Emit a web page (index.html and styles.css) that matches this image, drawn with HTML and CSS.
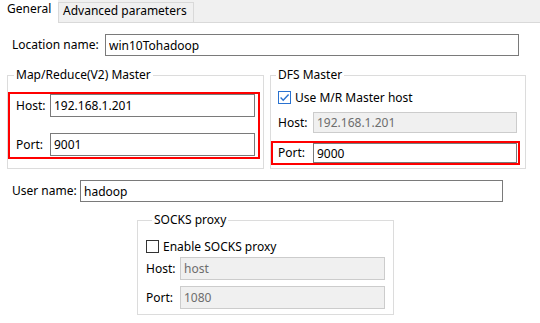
FILE: index.html
```html
<!DOCTYPE html>
<html>
<head>
<meta charset="utf-8">
<link rel="stylesheet" href="styles.css">
</head>
<body>
<div class="tabstrip">
  <div class="tab active">General</div>
  <div class="tab">Advanced parameters</div>
</div>
<div class="panel">
  <div class="row loc">
    <label class="lbl lbl-loc">Location name:</label>
    <input class="field in-loc" value="win10Tohadoop">
  </div>
  <div class="groups">
    <fieldset class="group mr">
      <legend>Map/Reduce(V2) Master</legend>
      <div class="hl hl-mr">
        <div class="frow"><label class="lbl lbl-s">Host:</label><input class="field in-mr" value="192.168.1.201"></div>
        <div class="frow gap16"><label class="lbl lbl-s">Port:</label><input class="field in-mr" value="9001"></div>
      </div>
    </fieldset>
    <fieldset class="group dfs">
      <legend>DFS Master</legend>
      <div class="check-row dfs-check">
        <span class="cb"><svg width="13" height="13" viewBox="0 0 13 13"><rect x="0.5" y="0.5" width="12" height="12" fill="#fff" stroke="#2a72d0"/><polyline points="2.6,6.6 5.2,9.2 10.6,3.6" fill="none" stroke="#2a72d0" stroke-width="1.4"/></svg></span>
        <span>Use M/R Master host</span>
      </div>
      <div class="frow dfs-host"><label class="lbl lbl-d">Host:</label><input class="field in-dfs off" value="192.168.1.201" disabled></div>
      <div class="hl hl-dfs">
        <div class="frow"><label class="lbl lbl-d">Port:</label><input class="field in-dfs port" value="9000"></div>
      </div>
    </fieldset>
  </div>
  <div class="row user">
    <label class="lbl lbl-user">User name:</label>
    <input class="field in-user" value="hadoop">
  </div>
  <fieldset class="group socks">
    <legend>SOCKS proxy</legend>
    <div class="check-row socks-check">
      <span class="cb"><svg width="13" height="13" viewBox="0 0 13 13"><rect x="0.5" y="0.5" width="12" height="12" fill="#fff" stroke="#333"/></svg></span>
      <span>Enable SOCKS proxy</span>
    </div>
    <div class="frow socks-host"><label class="lbl lbl-s">Host:</label><input class="field in-mr off" value="host" disabled></div>
    <div class="frow socks-port"><label class="lbl lbl-s">Port:</label><input class="field in-mr off" value="1080" disabled></div>
  </fieldset>
</div>
</body>
</html>
```
FILE: styles.css
```css
* { box-sizing: border-box; }
html, body { margin: 0; padding: 0; }
body {
  width: 540px;
  height: 323px;
  overflow: hidden;
  background: #fff;
  color: #000;
  font-family: "Noto Sans", "Noto Sans CJK SC", sans-serif;
  font-size: 12px;
  line-height: 16px;
}
.tabstrip {
  display: flex;
  align-items: flex-end;
  height: 23px;
  background: #f0f0f0;
  border-bottom: 1px solid #d9d9d9;
}
.tab {
  height: 20px;
  width: 136px;
  border: 1px solid #d9d9d9;
  border-bottom: none;
  background: #f0f0f0;
  padding: 0 0 0 4px;
}
.tab.active {
  align-self: flex-start;
  height: 23px;
  width: 58px;
  border: none;
  background: #fff;
  padding: 1px 0 0 7px;
}
.row { display: flex; align-items: center; padding-left: 12px; }
.loc { margin-top: 11px; }
.lbl { flex: none; white-space: nowrap; }
.lbl-loc { width: 93px; }
.lbl-user { width: 68px; }
.lbl-s { width: 34px; }
.lbl-d { width: 35px; }
.field {
  height: 22px;
  margin: 0;
  border: 1px solid #7a7a7a;
  border-radius: 0;
  padding: 0 3px;
  font: inherit;
  color: #000;
  background: #fff;
  outline: none;
}
.field.off {
  background: #f0f0f0;
  border-color: #cccccc;
  color: #6d6d6d;
}
.in-loc { width: 414px; }
.in-user { width: 423px; }
.in-mr { width: 205px; height: 23px; }
.in-dfs { width: 204px; height: 21px; }
.in-dfs.port { height: 20px; }
.groups { display: flex; gap: 6px; padding-left: 7px; margin-top: 11px; }
.group {
  margin: 0;
  padding: 0;
  min-width: 0;
  border: 1px solid #dcdcdc;
}
.group legend {
  padding: 0 2px;
  margin-left: 6px;
  line-height: 16px;
}
.mr { width: 257px; height: 102px; padding: 9px 0 0 0; }
.dfs { width: 256px; height: 102px; padding: 8px 0 0 0; }
.dfs legend { margin-left: 5px; }
.hl { border: 2px solid #ff0000; }
.hl-mr { width: 252px; padding: 0 3px 1px 6px; }
.hl-dfs { width: 249px; padding: 0 1px 0 5px; margin-top: 8px; }
.frow { display: flex; align-items: center; }
.gap16 { margin-top: 16px; }
.check-row { display: flex; align-items: center; height: 13px; }
.cb { display: flex; width: 13px; height: 13px; margin-right: 4px; flex: none; }
.dfs-check { padding-left: 7px; }
.dfs-host { padding-left: 7px; margin-top: 8px; }
.user { margin-top: 11px; }
.socks { width: 257px; height: 103px; margin: 10px 0 0 137px; padding: 12px 0 0 8px; }
.socks-host { margin-top: 4px; }
.socks-port { margin-top: 6px; }
```
